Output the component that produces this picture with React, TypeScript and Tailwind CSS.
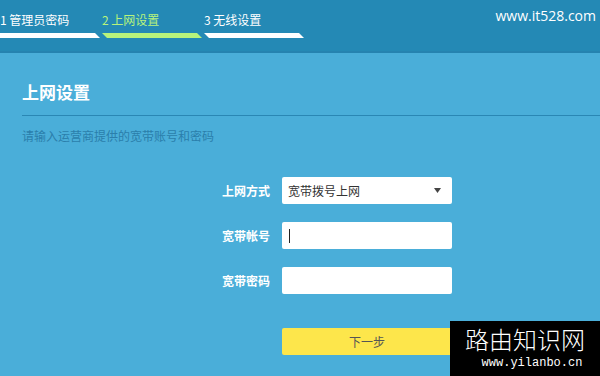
import React from "react";

const cjk = { fontFamily: '"Microsoft YaHei", "Noto Sans CJK SC", sans-serif' };

function StepBar({ color, first }: { color: string; first?: boolean }) {
  return (
    <svg width="100" height="5" viewBox="0 0 100 5" className="block">
      {first ? (
        <polygon points="0,0 95,0 100,5 0,5" fill={color} />
      ) : (
        <polygon points="0,0 95,0 100,5 5,5" fill={color} />
      )}
    </svg>
  );
}

export default function App() {
  return (
    <div className="w-[600px] h-[376px] relative overflow-hidden bg-[#4aaed9]" style={cjk}>
      <div className="h-[53px] bg-[#2489b5] flex justify-between border-b-[2px] border-[#2583b0]">
        <div className="flex pt-[12px] gap-[2px]">
          <div className="w-[100px] flex flex-col">
            <span className="text-[12px] leading-[16px] text-white">1 管理员密码</span>
            <div className="mt-[5px]"><StepBar color="#ffffff" first /></div>
          </div>
          <div className="w-[100px] flex flex-col">
            <span className="text-[12px] leading-[16px] text-[#b8f37c]">2 上网设置</span>
            <div className="mt-[5px]"><StepBar color="#b8f37c" /></div>
          </div>
          <div className="w-[100px] flex flex-col">
            <span className="text-[12px] leading-[16px] text-white">3 无线设置</span>
            <div className="mt-[5px]"><StepBar color="#ffffff" /></div>
          </div>
        </div>
        <div className="pt-[5px] pr-[4px] text-[14px] text-white" style={{ fontFamily: '"Open Sans", "Noto Sans", sans-serif' }}>
          www.it528.com
        </div>
      </div>

      <div className="pl-[22px]">
        <div className="pt-[28px] text-[17px] leading-[22px] font-bold text-white">上网设置</div>
        <div className="mt-[12px] h-px bg-[#2a87b4]" />
        <div className="mt-[12px] text-[12px] leading-[16px] text-[#2b7eab]">请输入运营商提供的宽带账号和密码</div>
      </div>

      <div className="mt-[33px] flex flex-col gap-[18px]">
        <div className="flex items-center">
          <div className="w-[270px] text-right text-[12px] font-bold text-white">上网方式</div>
          <div className="ml-[12px] w-[170px] h-[27px] bg-white rounded-[2px] flex items-center justify-between px-[6px]">
            <span className="text-[12px] text-[#333]">宽带拨号上网</span>
            <svg width="7" height="5" viewBox="0 0 7 5" className="mr-[5px]">
              <polygon points="0,0 7,0 3.5,5" fill="#444" />
            </svg>
          </div>
        </div>
        <div className="flex items-center">
          <div className="w-[270px] text-right text-[12px] font-bold text-white">宽带帐号</div>
          <div className="ml-[12px] w-[170px] h-[27px] bg-white rounded-[2px] flex items-center px-[7px]">
            <div className="w-px h-[14px] bg-[#222]" />
          </div>
        </div>
        <div className="flex items-center">
          <div className="w-[270px] text-right text-[12px] font-bold text-white">宽带密码</div>
          <div className="ml-[12px] w-[170px] h-[27px] bg-white rounded-[2px]" />
        </div>
        <div className="flex mt-[16px]">
          <div className="ml-[282px] w-[170px] h-[27px] bg-[#fde64b] rounded-[2px] flex items-center justify-center text-[12px] text-[#555]">
            下一步
          </div>
        </div>
      </div>

      <div className="absolute left-[450px] top-[321px] w-[150px] h-[55px] bg-black flex flex-col items-center">
        <div className="mt-[5px] text-[24px] leading-[26px] text-white" style={{ fontFamily: '"Noto Sans CJK SC", sans-serif', fontWeight: 300 }}>路由知识网</div>
        <div className="mt-[5px] text-[12px] leading-[12px] text-white ml-[14px]" style={{ fontFamily: '"Liberation Mono", monospace' }}>www.yilanbo.cn</div>
      </div>
    </div>
  );
}
